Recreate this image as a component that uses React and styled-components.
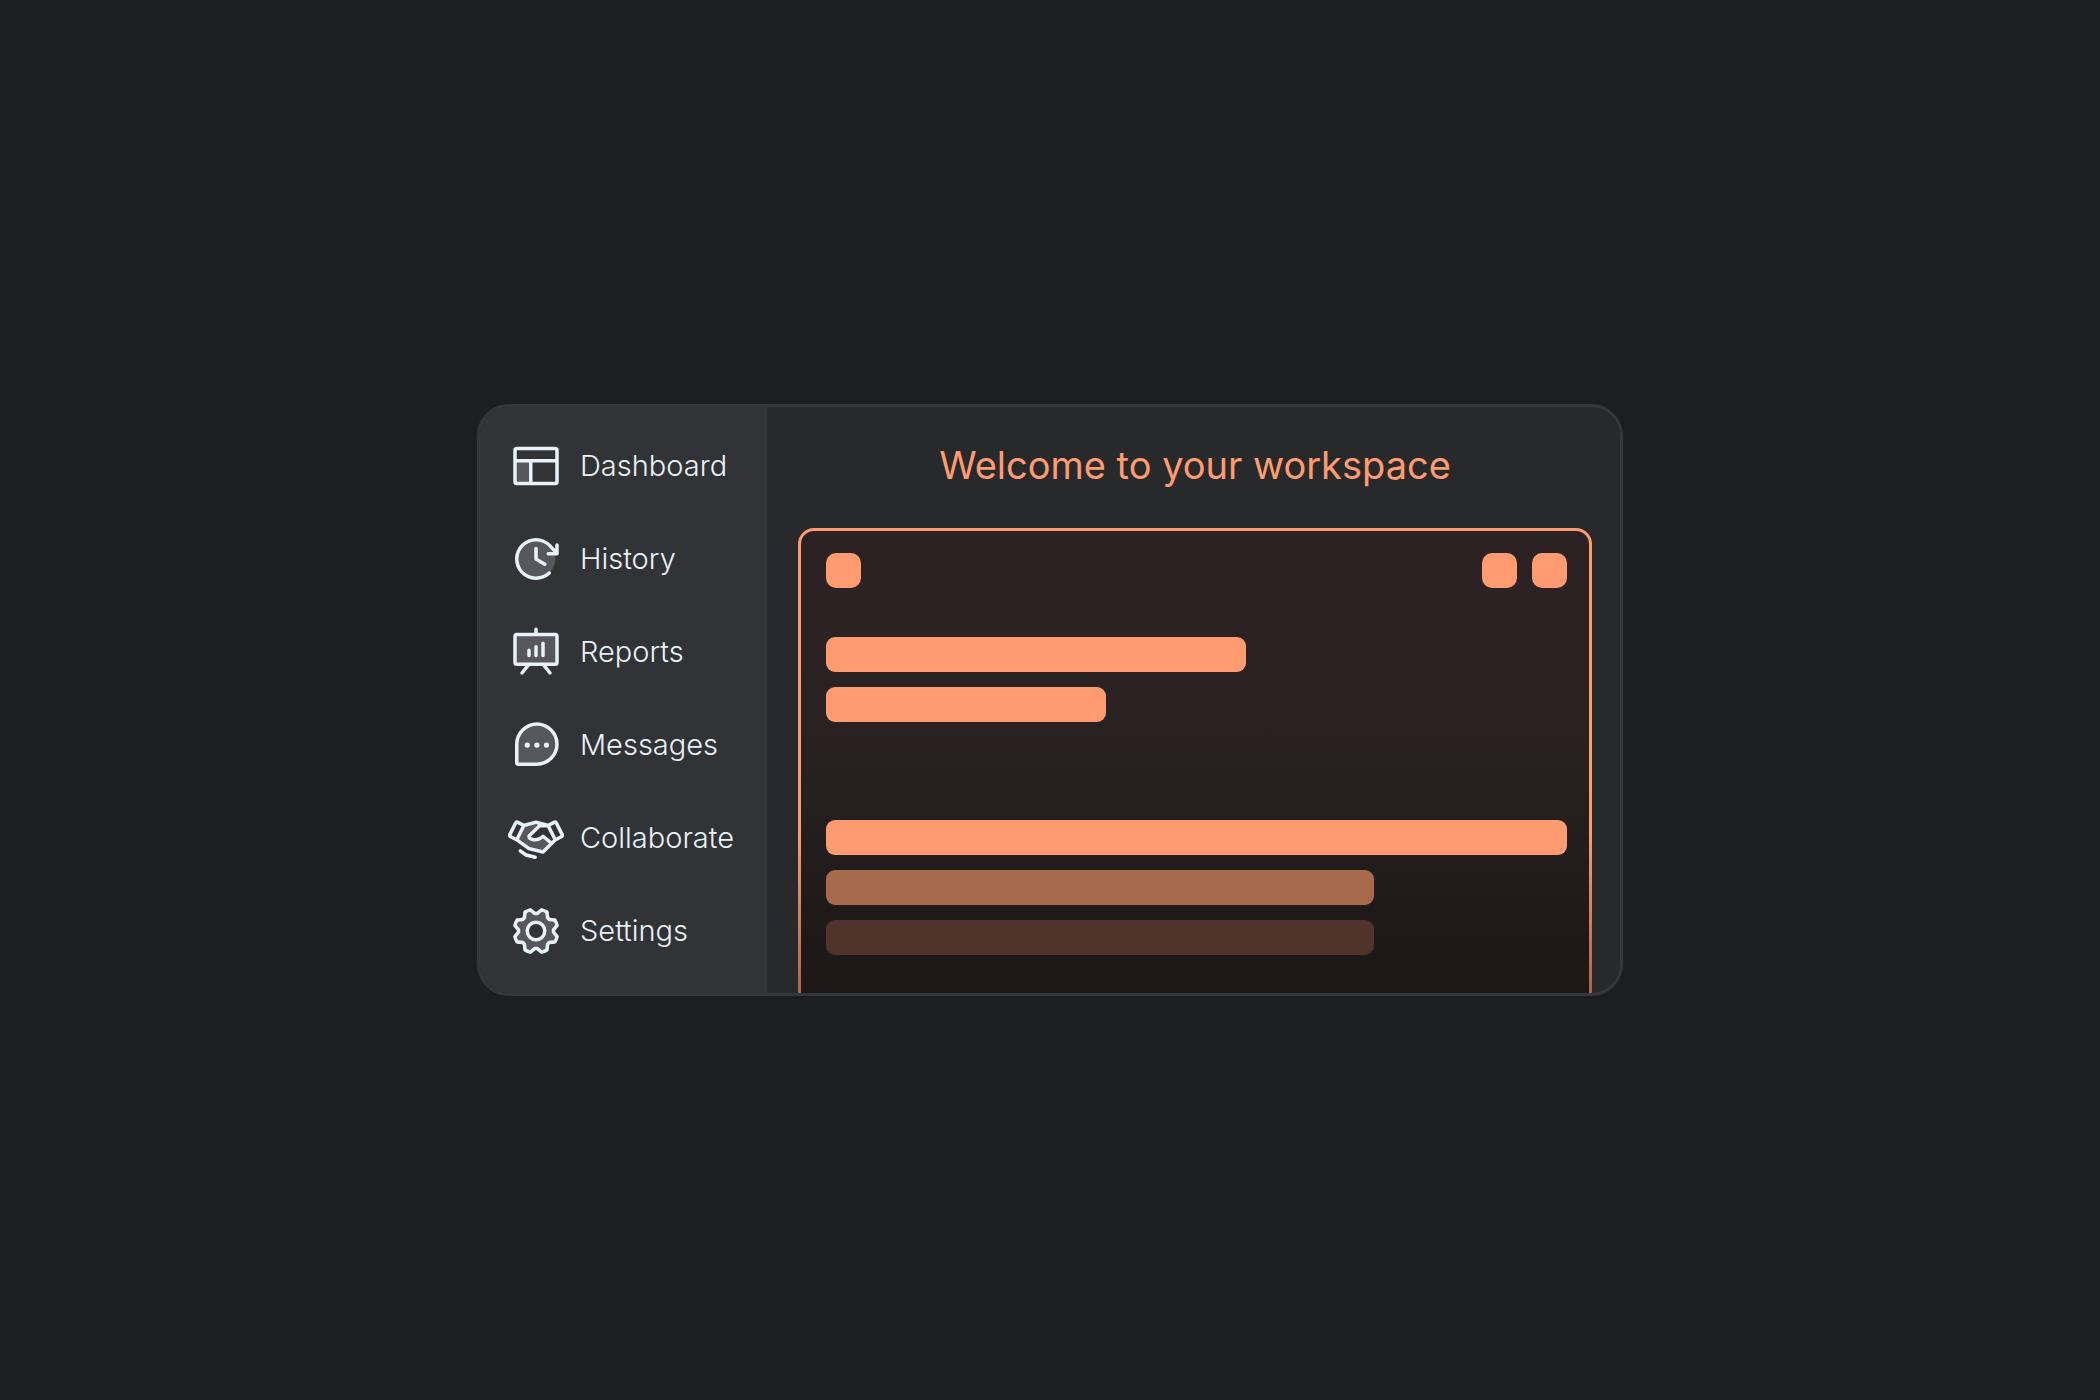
import React from "react";
import { createGlobalStyle, styled } from "styled-components";
import {
    PiChatTeardropDotsDuotone,
    PiClockClockwiseDuotone,
    PiGearDuotone,
    PiHandshakeDuotone,
    PiLayoutDuotone,
    PiPresentationChartDuotone,
} from "react-icons/pi";

const GlobalStyle = createGlobalStyle`
:root {
    --page: #1d1e20;
    --surface: #28292b;
    --sidebar: #323336;
    --line: #36373a;
    --text: #e8f2f8;
    --accent: #ff9b70;
}
* {
    box-sizing: border-box;
}
body {
    margin: 0;
    background: var(--page);
    color: var(--text);
    font-family: Inter, "Liberation Sans", sans-serif;
}
`

const Page = styled.main`
    min-height: 100vh;
    display: flex;
    align-items: center;
    justify-content: center;
    padding: 32px;
`

const Card = styled.div`
    display: flex;
    width: 100%;
    max-width: 1146px;
    border: 3px solid var(--line);
    border-radius: 32px;
    overflow: hidden;
    background: var(--surface);
`

const Sidebar = styled.nav`
    flex: none;
    width: 287px;
    padding: 31px 28px;
    border-right: 3px solid var(--line);
    background: var(--sidebar);
`

const NavList = styled.ul`
    display: flex;
    flex-direction: column;
    gap: 37px;
    margin: 0;
    padding: 0;
    list-style: none;
`

const NavLink = styled.a`
    display: flex;
    align-items: center;
    gap: 16px;
    color: inherit;
    font-size: 29px;
    font-weight: 300;
    line-height: 36px;
    text-decoration: none;
    svg {
        flex: none;
        width: 56px;
        height: 56px;
    }
`

const Workspace = styled.section`
    flex: 1;
    min-width: 0;
    display: flex;
    flex-direction: column;
    padding: 34px 28px 0 31px;
`

const Title = styled.h1`
    margin: 0 0 39px;
    color: var(--accent);
    font-size: 38px;
    font-weight: 400;
    line-height: 48px;
    text-align: center;
`

// the outer layer is the outline, so that it can fade out with the panel
const Outline = styled.div`
    flex: 1;
    display: flex;
    padding: 3px 3px 0;
    border-radius: 16px 16px 0 0;
    background: linear-gradient(var(--accent) 65%, #a9664a);
`

const Panel = styled.div`
    flex: 1;
    min-width: 0;
    padding: 22px 22px 38px 25px;
    border-radius: 13px 13px 0 0;
    background: linear-gradient(#2c2224 25%, #272020 55%, #1f1818 90%);
`

const Toolbar = styled.div`
    display: flex;
    gap: 15px;
    margin-bottom: 49px;
`

const Square = styled.span`
    width: 35px;
    height: 35px;
    border-radius: 10px;
    background: var(--accent);
    &:first-child {
        margin-right: auto;
    }
`

const Lines = styled.div`
    display: flex;
    flex-direction: column;
    gap: 15px;
    & + & {
        margin-top: 98px;
    }
`

const Line = styled.div`
    width: ${(props) => props.$width};
    max-width: 100%;
    height: 35px;
    border-radius: 9px;
    background: ${(props) => props.$color || "var(--accent)"};
`

const items = [
    { label: "Dashboard", Icon: PiLayoutDuotone },
    { label: "History", Icon: PiClockClockwiseDuotone },
    { label: "Reports", Icon: PiPresentationChartDuotone },
    { label: "Messages", Icon: PiChatTeardropDotsDuotone },
    { label: "Collaborate", Icon: PiHandshakeDuotone },
    { label: "Settings", Icon: PiGearDuotone },
]

function App() {
    return (
        <Page>
            <GlobalStyle />
            <Card>
                <Sidebar>
                    <NavList>
                        {items.map(({ label, Icon }) => (
                            <li key={label}>
                                <NavLink href={"#" + label.toLowerCase()}>
                                    <Icon aria-hidden="true" />
                                    {label}
                                </NavLink>
                            </li>
                        ))}
                    </NavList>
                </Sidebar>
                <Workspace>
                    <Title>Welcome to your workspace</Title>
                    <Outline>
                        <Panel>
                            <Toolbar>
                                <Square />
                                <Square />
                                <Square />
                            </Toolbar>
                            <Lines>
                                <Line $width="420px" />
                                <Line $width="280px" />
                            </Lines>
                            <Lines>
                                <Line $width="100%" />
                                <Line $width="548px" $color="#a76a4c" />
                                <Line $width="548px" $color="#50342b" />
                            </Lines>
                        </Panel>
                    </Outline>
                </Workspace>
            </Card>
        </Page>
    )
}

export default App;
